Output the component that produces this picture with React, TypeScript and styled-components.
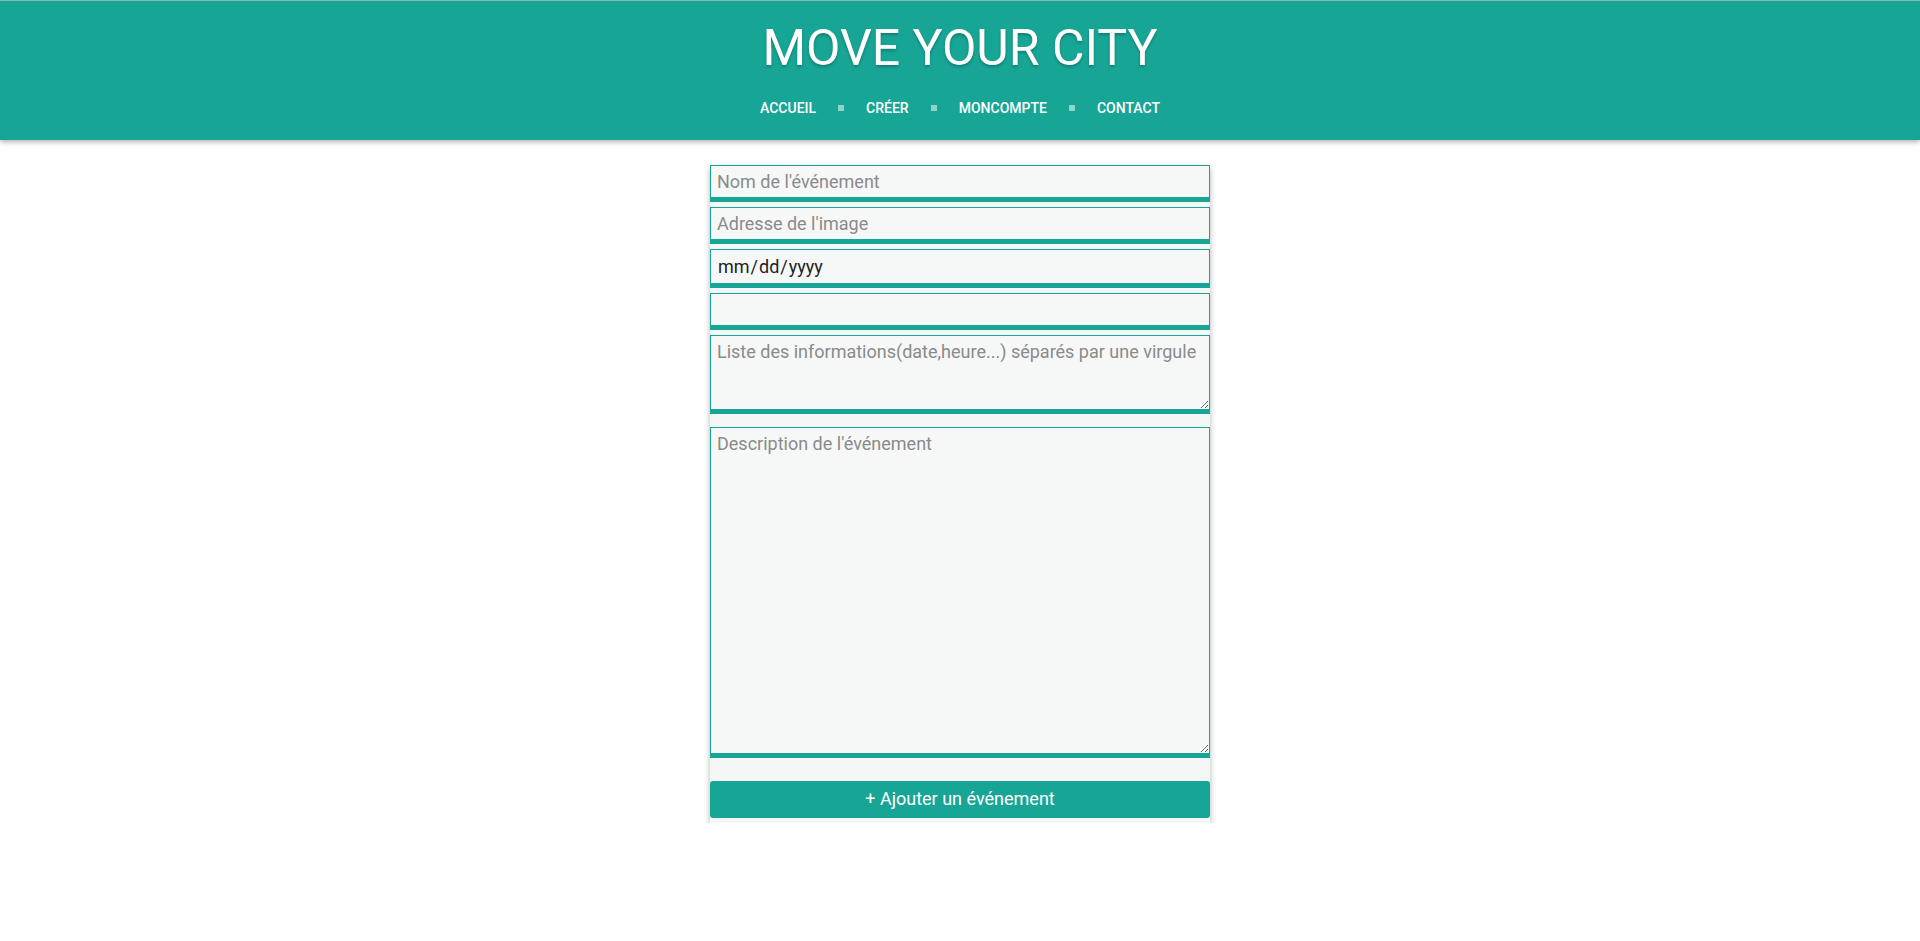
import React from "react";
import styled, {createGlobalStyle} from "styled-components";

const teal = "#17a696";

const GlobalStyle = createGlobalStyle`
  body {
    margin: 0;
    background: #ffffff;
    font-family: Roboto, "Noto Sans", sans-serif;
  }
`;

const Header = styled.header`
  height: 140px;
  background: ${teal};
  box-shadow: 0 2px 5px rgba(0, 0, 0, 0.3);
  border-top: 1px solid #8fb7b8;
  box-sizing: border-box;
  display: flex;
  flex-direction: column;
  align-items: center;
`;

const Title = styled.h1`
  margin: 18px 0 0;
  font-size: 50px;
  font-weight: 400;
  line-height: 58px;
  color: #ffffff;
  text-shadow: 0 2px 3px rgba(0, 0, 0, 0.25);
`;

const Nav = styled.nav`
  margin-top: 22px;
  display: flex;
  align-items: center;
`;

const NavLink = styled.a`
  color: #ffffff;
  font-size: 14px;
  font-weight: 500;
  text-transform: uppercase;
  text-decoration: none;
  line-height: 18px;
`;

const Dot = styled.span`
  width: 6px;
  height: 6px;
  margin: 0 22px;
  background: #8fd4c9;
`;

const Form = styled.form`
  width: 500px;
  margin: 25px auto 0;
  padding-bottom: 5px;
  background: #f5f7f7;
  box-shadow: 0 3px 6px rgba(0, 0, 0, 0.3);
  display: flex;
  flex-direction: column;
`;

const Field = styled.input<{$tall?: boolean}>`
  box-sizing: border-box;
  width: 100%;
  height: ${(p) => (p.$tall ? 39 : 37)}px;
  margin: 0 0 5px;
  padding: 0 6px;
  border: 1px solid ${teal};
  border-bottom: 5px solid ${teal};
  background: #f6f8f8;
  font-family: Roboto, sans-serif;
  font-size: 18px;
  color: #222;
  outline: none;

  &::placeholder {
    color: #8a8a8a;
  }

  &::-webkit-calendar-picker-indicator {
    display: none;
  }
`;

const Area = styled.textarea<{$height: number; $after: number}>`
  box-sizing: border-box;
  width: 100%;
  height: ${(p) => p.$height}px;
  margin: 0 0 ${(p) => p.$after}px;
  padding: 5px 6px;
  border: 1px solid ${teal};
  border-bottom: 5px solid ${teal};
  background: #f6f8f8;
  font-family: Roboto, sans-serif;
  font-size: 18px;
  color: #222;
  outline: none;
  display: block;

  &::placeholder {
    color: #8a8a8a;
  }
`;

const Submit = styled.button`
  height: 37px;
  width: 100%;
  border: none;
  border-radius: 3px;
  background: ${teal};
  color: #ffffff;
  font-family: Roboto, sans-serif;
  font-size: 18px;
  line-height: 35px;
  padding: 0 0 2px;
  cursor: pointer;
`;

const links = ["Accueil", "Créer", "MonCompte", "Contact"];

export default function App() {
  return (
    <>
      <GlobalStyle />
      <Header>
        <Title>MOVE YOUR CITY</Title>
        <Nav>
          {links.map((l, i) => (
            <React.Fragment key={l}>
              {i > 0 && <Dot />}
              <NavLink href="#">{l}</NavLink>
            </React.Fragment>
          ))}
        </Nav>
      </Header>
      <Form onSubmit={(e) => e.preventDefault()}>
        <Field placeholder="Nom de l'événement" />
        <Field placeholder="Adresse de l'image" />
        <Field type="date" $tall />
        <Field />
        <Area
          $height={79}
          $after={13}
          placeholder="Liste des informations(date,heure...) séparés par une virgule"
        />
        <Area $height={331} $after={23} placeholder="Description de l'événement" />
        <Submit type="submit">+ Ajouter un événement</Submit>
      </Form>
    </>
  );
}
